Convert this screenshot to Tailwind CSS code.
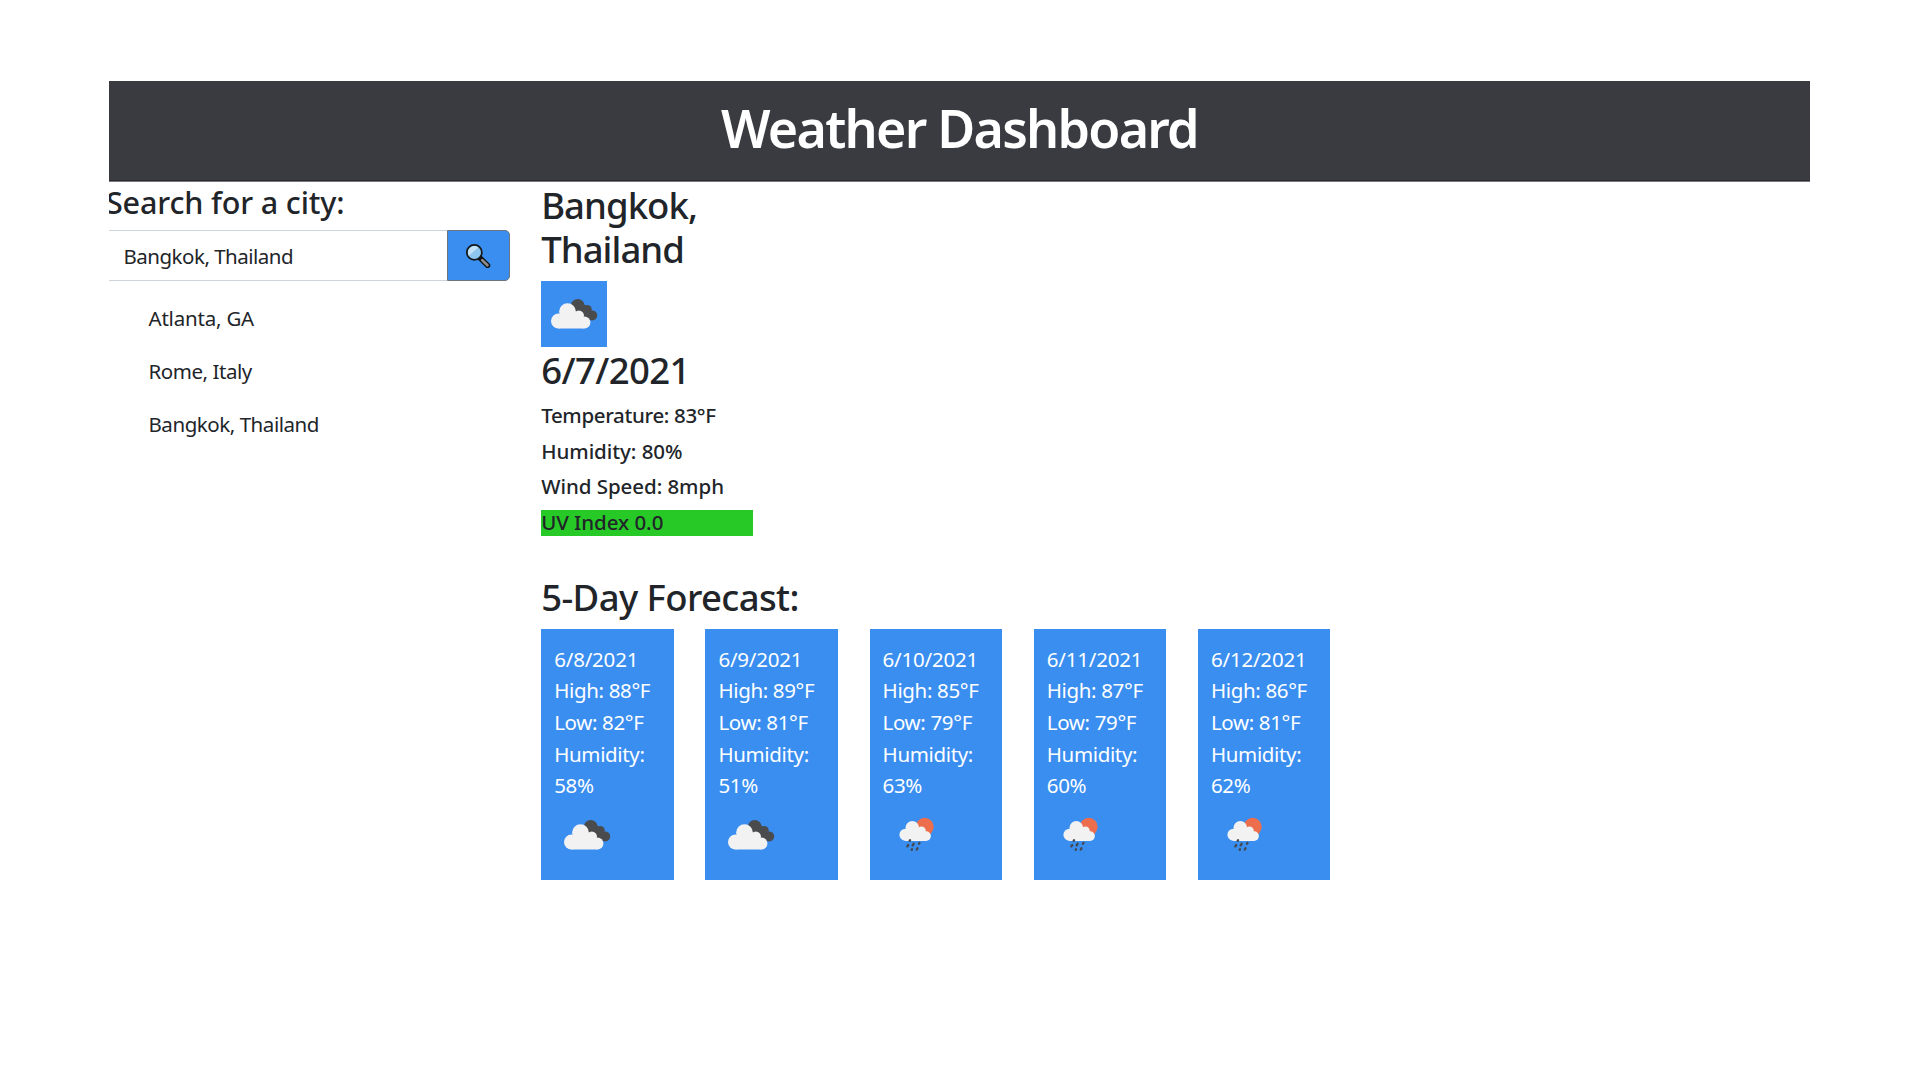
<!DOCTYPE html>
<html lang="en">
<head>
<meta charset="utf-8">
<title>Weather Dashboard</title>
<script src="https://cdn.jsdelivr.net/npm/@tailwindcss/browser@4"></script>
</head>
<body class="bg-white font-['Noto_Sans','Open_Sans',sans-serif] text-[#212529] text-[20.5px] h-screen overflow-hidden pl-[109px] pr-[110px] pt-[81px]">
<svg class="hidden">
  <symbol id="clouds" viewBox="0 0 66 66">
    <g fill="#4a4b4d"><circle cx="36.7" cy="25" r="6.9"/><circle cx="46.1" cy="28.6" r="4.7"/><circle cx="51.2" cy="34.4" r="5"/><path d="M36 20h5l10 15-3 4.4H38z"/></g>
    <g fill="#f2f2f2"><circle cx="17.4" cy="40" r="7.4"/><circle cx="26.5" cy="30.6" r="8.4"/><circle cx="37.8" cy="34.6" r="5.2"/><circle cx="43.5" cy="41.5" r="5.9"/><path d="M18 34h24l1.5 13.4H17.4z"/></g>
  </symbol>
  <symbol id="rain" viewBox="0 0 66 66">
    <circle cx="41.7" cy="24.8" r="9" fill="#ec6e4c"/>
    <g fill="#f2f2f2"><circle cx="22.5" cy="32.8" r="6.1"/><circle cx="29.3" cy="25.8" r="6.8"/><circle cx="38.5" cy="28.8" r="4.3"/><circle cx="43.1" cy="34.1" r="4.8"/><path d="M23 28h17l3.1 10.9H22.5z"/></g>
    <g stroke="#45484c" stroke-width="2.3" stroke-linecap="round"><path d="M27.1 38.1l-.4.6M25.2 43l-.8 1.4M30.6 41.8l-.9 1.6M36.5 41l-.5.7M29 47.3l-.3.5M34.5 46.3l-.7 1.2"/></g>
  </symbol>
</svg>
<header class="h-[101px] bg-[#3a3b40] border-b border-[#77777c] pt-[15px] shadow-[inset_0_-1px_0_#2b2b30]">
  <h1 class="text-center text-white font-semibold text-[52px] leading-[64px] tracking-[-1.75px]">Weather Dashboard</h1>
</header>
<main class="flex">
  <aside class="w-[432.2px] shrink-0">
    <div class="overflow-hidden h-[39px] pt-px"><h3 class="font-medium text-[30.5px] leading-[38px] tracking-[-0.15px] -ml-[3px]">Search for a city:</h3></div>
    <div class="flex mt-[9px] h-[51px] w-[401px]">
      <div class="grow border-y border-[#ced4da] flex items-center pl-[14.5px] pt-px tracking-[-0.5px]">Bangkok, Thailand</div>
      <button class="w-[63px] bg-[#398ef0] border border-[#6c757d] rounded-r-[5px] flex items-center justify-center pr-px">
        <svg class="w-[25px] h-[25px]" viewBox="0 0 24 24" fill="none" stroke-linecap="round">
          <path d="M12.6 13.6l8.1 7.9" stroke="#111" stroke-width="5.2"/>
          <path d="M15.6 16.5l5 4.9" stroke="#8b8b8b" stroke-width="2.6"/>
          <circle cx="8" cy="9" r="7.2" fill="#8ec6ef" stroke="#15181b" stroke-width="1.7"/>
          <path d="M2.7 12.2A6.2 6.2 0 0 1 11.7 4.2z" fill="#c3e2f5"/>
        </svg>
      </button>
    </div>
    <ul class="mt-[11px] pl-[39.5px] leading-[52.8px] tracking-[-0.45px]">
      <li class="tracking-[-0.2px]">Atlanta, GA</li><li>Rome, Italy</li><li>Bangkok, Thailand</li>
    </ul>
  </aside>
  <section class="grow">
    <div class="w-[212px] font-medium">
      <h2 class="pt-[0.8px] text-[36.5px] leading-[44.4px] tracking-[-0.95px]">Bangkok,<br>Thailand</h2>
      <div class="mt-[9.2px] w-[65.5px] h-[66px] bg-[#398ef0]"><svg class="w-[66px] h-[66px]"><use href="#clouds"/></svg></div>
      <h2 class="text-[36.5px] leading-[44.4px] tracking-[-0.6px] mt-[1.4px]">6/7/2021</h2>
      <div class="mt-[10.1px] flex flex-col gap-[10.6px] leading-[25.3px] tracking-[-0.05px]">
        <p class="tracking-[-0.35px]">Temperature: 83°F</p>
        <p>Humidity: 80%</p>
        <p>Wind Speed: 8mph</p>
        <p class="bg-[#27c927]">UV Index 0.0</p>
      </div>
    </div>
    <h2 class="mt-[39.7px] font-medium text-[36.5px] leading-[44.4px] tracking-[-0.6px]">5-Day Forecast:</h2>
    <div id="forecast" class="mt-[8.8px] flex gap-[31.7px]"></div>
  </section>
</main>
<script>
const days = [
  ['6/8/2021', 88, 82, 58, 'clouds'],
  ['6/9/2021', 89, 81, 51, 'clouds'],
  ['6/10/2021', 85, 79, 63, 'rain'],
  ['6/11/2021', 87, 79, 60, 'rain'],
  ['6/12/2021', 86, 81, 62, 'rain'],
];
document.getElementById('forecast').innerHTML = days.map(([d, hi, lo, hum, icon]) => `
  <div class="w-[132.5px] h-[251px] shrink-0 bg-[#398ef0] text-white pt-[15.2px] pl-[13px] leading-[31.6px] tracking-[-0.35px]">
    <p class="tracking-[-0.2px]">${d}</p><p>High: ${hi}°F</p><p>Low: ${lo}°F</p><p>Humidity:<br>${hum}%</p>
    <svg class="w-[66px] h-[66px]"><use href="#${icon}"/></svg>
  </div>`).join('');
</script>
</body>
</html>
